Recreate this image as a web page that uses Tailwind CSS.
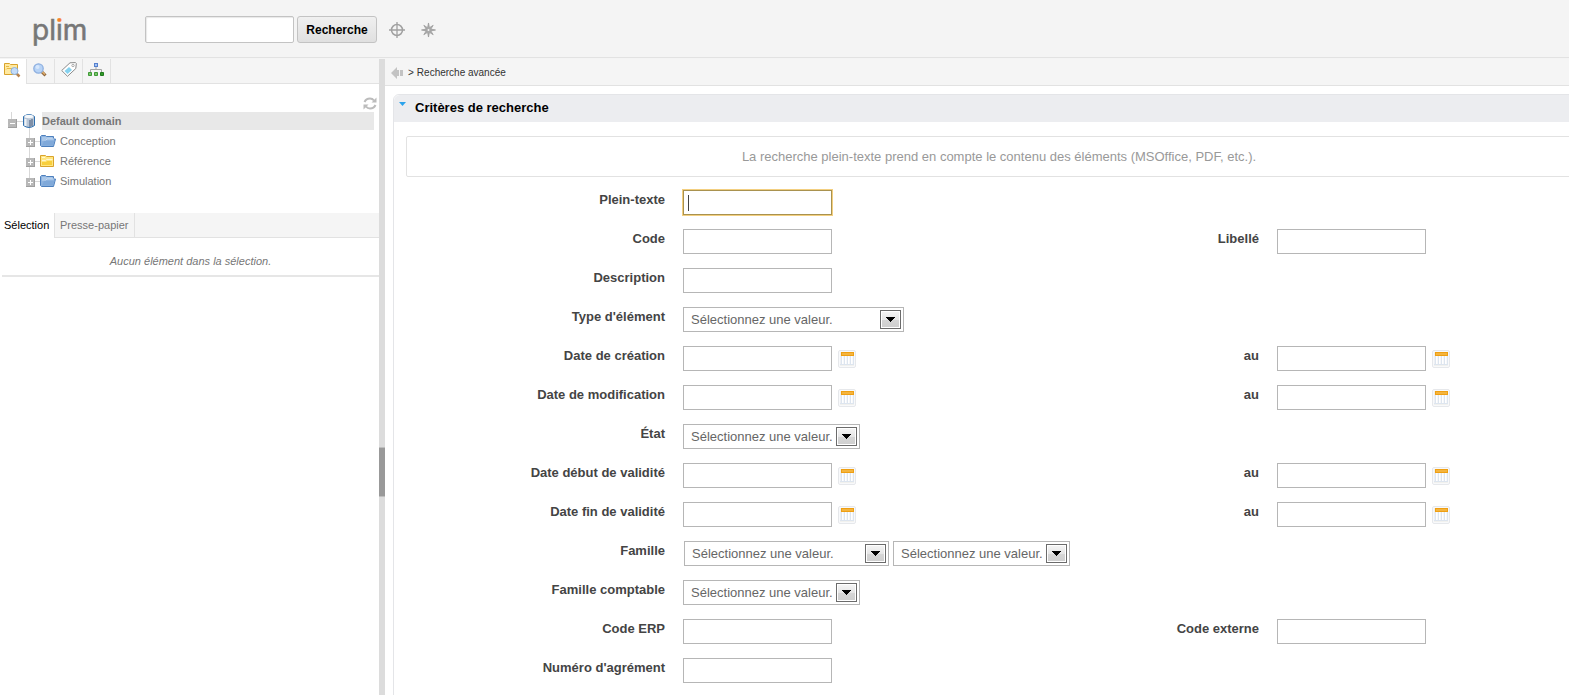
<!DOCTYPE html>
<html lang="fr">
<head>
<meta charset="utf-8">
<title>plim - Recherche avancée</title>
<script src="https://cdn.jsdelivr.net/npm/@tailwindcss/browser@4"></script>
</head>
<body class="flex h-screen flex-col overflow-hidden bg-white font-['Liberation_Sans',Arial,sans-serif] text-[11px] text-[#777]">

<svg class="absolute size-0" aria-hidden="true">
  <defs>
    <linearGradient id="ag" x2="0" y2="1"><stop offset="0" stop-color="#f4f4f4"/><stop offset=".5" stop-color="#e6e6e6"/><stop offset=".52" stop-color="#d6d6d6"/><stop offset="1" stop-color="#cfcfcf"/></linearGradient>
    <linearGradient id="dot" gradientUnits="userSpaceOnUse" x1="0" y1="0" x2="0" y2="40"><stop offset=".32" stop-color="#f5822a"/><stop offset=".32" stop-color="#777"/></linearGradient>
  </defs>
  <symbol id="calendar" viewBox="0 0 18 18">
    <rect x=".5" y=".5" width="17" height="17" rx="1.5" fill="#f8f9fb" stroke="#e6e8eb"/>
    <rect x="2" y="2" width="14" height="14" fill="#f1f1ee"/>
    <path d="M2 6H16V15H2Z" fill="#eef0f4"/>
    <path d="M4.5 6V14M7.500 6V14M10.500 6V14M13.500 6V14" stroke="#fff" stroke-width="2"/>
    <path d="M3.500 6V14M6.500 6V14M9.500 6V14M12.500 6V14M2 14.500H16M15.500 6V14" stroke="#dde5ef"/>
    <rect x="3" y="2" width="13" height="4" fill="#ef9f12"/>
    <path d="M4 4H15" stroke="#f8c96c"/>
  </symbol>
  <symbol id="arrow" viewBox="0 0 21 19">
    <rect x=".5" y=".5" width="20" height="18" fill="#fff" stroke="#6b6b6b"/>
    <rect x="2" y="2" width="17" height="15" fill="url(#ag)"/>
    <path d="M6 7H15V8H14V9H13V10H12V11H11V12H10V11H9V10H8V9H7V8H6Z" fill="#000"/>
  </symbol>
  <symbol id="folder-blue" viewBox="0 0 16 12">
    <path d="M.5 10.500V1.500L1.500.5H5.500L6.500 1.500H13.500V4H15.500L13.500 11.500H1.500Z" fill="#8db3df" stroke="#4c7fbd"/>
    <path d="M2 3H12.500M2 5H6L7 4H14" stroke="#c5daf1" fill="none"/>
    <path d="M2 10.500L4 6H14.500L13 10.500Z" fill="#80a9d9"/>
  </symbol>
  <symbol id="folder-yellow" viewBox="0 0 14 12">
    <path d="M.5 11.500V.5H5.500L6.500 1.500H13.500V11.500Z" fill="#ffe681" stroke="#d9a32c"/>
    <path d="M2 2.500H5M2 5.500H5.500L6.500 4.500H12.500" stroke="#fff7cf" fill="none"/>
    <path d="M2 7H6L7 6H12V10H2Z" fill="#f8cf3d"/>
  </symbol>
  <symbol id="plus" viewBox="0 0 9 9">
    <rect width="9" height="9" fill="#a0a0a0"/><path d="M0 0H8V8H0Z" fill="#b8b8b8"/>
    <path d="M2 4.500H7M4.500 2V7" stroke="#fff"/>
  </symbol>
  <symbol id="lens" viewBox="0 0 14 14">
    <path d="M8.500 8.500L12.500 12.500" stroke="#8d653d" stroke-width="3"/><path d="M8.500 8L12 11.500" stroke="#e2b06c" stroke-width="1.500"/>
    <circle cx="5.500" cy="5.500" r="4.700" fill="#b7d3f6" stroke="#8fb0e0" stroke-width="1.300"/>
    <circle cx="4.500" cy="4" r="2" fill="#d6e7fc"/>
  </symbol>
</svg>

<header class="h-[59px] shrink-0 bg-[#f4f4f4]">
  <div class="flex h-[58px] w-full items-center border-b border-[#e2e2e2] pt-[2px]">
    <a href="#" aria-label="plim" class="ml-8 w-[113px] shrink-0">
      <svg width="64" height="40" viewBox="0 0 64 40">
        <text x="0" y="30" font-family="Inter, sans-serif" font-size="28" fill="#777" stroke="#777" stroke-width=".6">pl<tspan fill="url(#dot)" stroke="url(#dot)">i</tspan>m</text>
      </svg>
    </a>
    <form class="flex items-center gap-[3px]">
      <input aria-label="Recherche" class="h-[27px] w-[149px] rounded-xs border border-[#c3c3c3] bg-white px-1 text-[13px] shadow-[inset_1px_1px_1px_#e8e8e8]">
      <button type="button" class="h-[27px] w-20 rounded-[3px] border border-[#c3c3c3] bg-linear-to-b from-[#f0f0f0] to-[#e0e0e0] text-center text-[12px] font-bold text-black">Recherche</button>
    </form>
    <button type="button" aria-label="Cibler" class="ml-3">
      <svg width="16" height="16" viewBox="0 0 16 16" fill="none" stroke="#a0a0a0"><circle cx="8" cy="8" r="5.500" stroke-width="1.500"/><path d="M8 0V16M0 8H16" stroke-width="1.300"/></svg>
    </button>
    <button type="button" aria-label="Raccourcis" class="ml-4">
      <svg width="15" height="16" viewBox="0 0 16 16"><path d="M8 .5L9 5.500L13 3L10.500 7L15.500 8L10.500 9L13 13L9 10.500L8 15.500L7 10.500L3 13L5.500 9L.5 8L5.500 7L3 3L7 5.500Z" fill="#aaa" stroke="#999" stroke-width=".8"/><circle cx="8" cy="8" r="1" fill="#f4f4f4"/></svg>
    </button>
  </div>
</header>

<div class="flex min-h-0 flex-1">
  <aside class="w-[379px] shrink-0">
    <nav class="flex h-[25px] border-b border-[#e2e2e2] bg-[#f5f5f5]" aria-label="Navigation">
      <button type="button" aria-label="Explorer" class="flex h-[25px] w-[27px] items-start border-r border-[#e2e2e2] bg-white pt-1 pl-1">
        <svg width="17" height="15" viewBox="0 0 17 15"><path d="M.5 11.500V.5H5.500L6.500 1.500H13.500V11.500Z" fill="#ffe9a0" stroke="#d9a32c"/><path d="M2 3.500H5M2 6.500L3 5.500H9" stroke="#e8b944" fill="none"/><path d="M12.500 10.500L15.500 13.500" stroke="#b98450" stroke-width="2.500"/><circle cx="10.500" cy="8" r="3.500" fill="#c3dcfa" stroke="#8fb2de"/></svg>
      </button>
      <button type="button" aria-label="Rechercher" class="flex w-7 items-start border-r border-[#e2e2e2] pt-1 pl-[6px]"><svg width="14" height="14"><use href="#lens"/></svg></button>
      <button type="button" aria-label="Étiquettes" class="flex w-7 items-start border-r border-[#e2e2e2] pt-[3px] pl-[6px]">
        <svg width="16" height="15" viewBox="0 0 16 15"><path d="M.7 8.500L9 .8L14.500.6L15.300 1.500L14.800 6.500L6.500 14.300Z" fill="#fff" stroke="#8a8a8a"/><path d="M3.500 9L8 5L11 8L6.500 12Z" fill="#86d2ef"/><circle cx="12" cy="3.500" r="1.200" fill="#fff" stroke="#999" stroke-width=".8"/></svg>
      </button>
      <button type="button" aria-label="Arborescence" class="flex w-7 items-start border-r border-[#e2e2e2] pt-1 pl-[5px]">
        <svg width="16" height="13" viewBox="0 0 16 13"><path d="M8 4V7M2.500 9V6.500H13.500V9" fill="none" stroke="#a5a5a5"/><rect x="6.500" y=".5" width="3" height="3" fill="#a3c4f7" stroke="#5680cc"/><path d="M.5 9.500H3.500V12.500H.5ZM6.500 9.500H9.500V12.500H6.500Z" fill="#79c46b" stroke="#3f9a37"/><path d="M12.500 9.500H15.500V12.500H12.500Z" fill="#319a29" stroke="#207a1d"/></svg>
      </button>
    </nav>

    <div class="flex h-7 items-end justify-end pr-[2px] pb-[2px]">
      <button type="button" aria-label="Actualiser"><svg width="14" height="13" viewBox="0 0 14 13" fill="none" stroke="#bcbcbc" stroke-width="2"><path d="M1.500 5Q3 1.500 7 1.500Q9.500 1.500 11 3.500M12.500 8Q11 11.500 7 11.500Q4.500 11.500 3 9.500"/><path d="M13.500.5V5.500H8.500ZM.5 12.500V7.500H5.500Z" fill="#bcbcbc" stroke="none"/></svg></button>
    </div>

    <ul class="h-[101px]">
      <li>
        <div class="flex h-[19px] items-start pr-[5px]">
          <svg class="shrink-0" width="42" height="19" viewBox="0 0 42 19">
            <path d="M11.500-1V8M17 9.500H23M29.500 15V19" stroke="#d8d8d8"/>
            <rect x="8" y="7" width="9" height="9" fill="#a0a0a0"/><path d="M8 7H16V15H8Z" fill="#b8b8b8"/><path d="M10 11.500H15" stroke="#fff"/>
            <path d="M23.500 4.500Q29 .5 34.500 4.500V13.500Q29 17.500 23.500 13.500Z" fill="#b9c6d6" stroke="#2e6fae"/><ellipse cx="29" cy="4.500" rx="4.500" ry="1.700" fill="#f5f8fb"/><path d="M25.500 7V14" stroke="#eef3f7" stroke-width="2"/><path d="M30 8V15M32 7V14" stroke="#7f90a8" stroke-width="2"/>
          </svg>
          <a href="#" class="h-[18px] flex-1 bg-[#e8e8e8] leading-[18px] font-bold">Default domain</a>
        </div>
        <ul>
          <li class="flex h-5 items-center"><svg class="shrink-0" width="40" height="20"><path d="M29.500 0V20M34 10.500H40" stroke="#d8d8d8"/><use href="#plus" x="26" y="7" width="9" height="9"/></svg><svg width="16" height="12"><use href="#folder-blue"/></svg><a href="#" class="ml-1">Conception</a></li>
          <li class="flex h-5 items-center"><svg class="shrink-0" width="40" height="20"><path d="M29.500 0V20M34 10.500H40" stroke="#d8d8d8"/><use href="#plus" x="26" y="7" width="9" height="9"/></svg><svg width="14" height="12"><use href="#folder-yellow"/></svg><a href="#" class="ml-[6px]">Référence</a></li>
          <li class="flex h-5 items-center"><svg class="shrink-0" width="40" height="20"><path d="M29.500 0V10M34 10.500H40" stroke="#d8d8d8"/><use href="#plus" x="26" y="7" width="9" height="9"/></svg><svg width="16" height="12"><use href="#folder-blue"/></svg><a href="#" class="ml-1">Simulation</a></li>
        </ul>
      </li>
    </ul>

    <div class="flex h-[25px] border-b border-[#e2e2e2] bg-[#f5f5f5]">
      <button type="button" class="h-[25px] w-[55px] border-r border-[#e2e2e2] bg-white pl-1 text-left text-black">Sélection</button>
      <button type="button" class="w-20 border-r border-[#e2e2e2] pl-[5px] text-left">Presse-papier</button>
    </div>
    <p class="ml-[2px] h-[39px] border-b-2 border-[#e6e6e6] pt-[15px] text-center italic">Aucun élément dans la sélection.</p>
  </aside>

  <div class="flex w-[6px] shrink-0 items-center bg-[#dcdcdc] pt-[189px] pb-0" role="separator" aria-orientation="vertical">
    <div class="h-[50px] w-full border-y border-[#bdbdbd] bg-[#999]"></div>
  </div>

  <main class="min-w-0 flex-1 overflow-hidden">
    <nav class="flex h-[27px] items-center border-b border-[#e2e2e2] bg-[#f5f5f5] pt-px pl-[6px] text-[10px] text-[#333]" aria-label="Fil d'Ariane">
      <svg width="12" height="12" viewBox="0 0 12 12" fill="#c3c3c3"><path d="M0 6L6 0V3H8V9H6V12ZM9 3H12V9H9Z"/></svg>
      <span class="ml-[5px]">&gt;</span><a href="#" class="ml-[3px]">Recherche avancée</a>
    </nav>
    <section class="mt-2 -mr-9 ml-2 h-full rounded-t-md border border-[#e4e5e8]">
      <h2 class="flex h-[27px] rounded-t-md bg-[#ecedf0] pl-[5px] text-[13px] leading-[26px] font-bold text-black">
        <svg class="mt-[7px]" width="8" height="4"><path d="M0 0H7L3.500 4Z" fill="#2ba3ec"/></svg><span class="ml-2">Critères de recherche</span>
      </h2>
      <form class="px-3 pt-[14px] text-[13px]">
        <p class="h-[41px] rounded-xs border border-[#e2e2e2] text-center leading-[39px] text-[#999]">La recherche plein-texte prend en compte le contenu des éléments (MSOffice, PDF, etc.).</p>
        <div class="mt-[13px] mr-4 grid auto-rows-[25px] grid-cols-[259px_1fr_259px_1fr] gap-x-[18px] gap-y-[14px] text-[#666] [&>label]:text-right [&>label]:leading-5 [&>label]:font-bold [&>label]:text-[#444]">

          <label for="f1">Plein-texte</label>
          <div class="relative col-span-3"><input id="f1" autofocus class="h-[25px] w-[149px] border border-[#a9924f] bg-white px-1 caret-transparent outline-1 outline-[#f3cf80]"><span class="pointer-events-none absolute top-[5px] left-[5px] h-4 w-px bg-[#444]"></span></div>

          <label for="f2">Code</label>
          <div><input id="f2" class="h-[25px] w-[149px] border border-[#b6b6b6] bg-white px-1"></div>
          <label for="f3">Libellé</label>
          <div><input id="f3" class="h-[25px] w-[149px] border border-[#b6b6b6] bg-white px-1"></div>

          <label for="f4">Description</label>
          <div class="col-span-3"><input id="f4" class="h-[25px] w-[149px] border border-[#b6b6b6] bg-white px-1"></div>

          <label for="f5">Type d'élément</label>
          <div class="col-span-3 flex"><div class="relative"><select id="f5" class="h-[25px] w-[221px] appearance-none border border-[#b6b6b6] bg-white pl-[7px]"><option>Sélectionnez une valeur.</option></select><svg class="pointer-events-none absolute top-[3px] right-[3px]" width="21" height="19"><use href="#arrow"/></svg></div></div>

          <label for="f6">Date de création</label>
          <div class="flex items-start gap-[6px]"><input id="f6" class="h-[25px] w-[149px] border border-[#b6b6b6] bg-white px-1"><button type="button" aria-label="Calendrier" class="mt-1"><svg width="18" height="18"><use href="#calendar"/></svg></button></div>
          <label for="f7">au</label>
          <div class="flex items-start gap-[6px]"><input id="f7" class="h-[25px] w-[149px] border border-[#b6b6b6] bg-white px-1"><button type="button" aria-label="Calendrier" class="mt-1"><svg width="18" height="18"><use href="#calendar"/></svg></button></div>

          <label for="f8">Date de modification</label>
          <div class="flex items-start gap-[6px]"><input id="f8" class="h-[25px] w-[149px] border border-[#b6b6b6] bg-white px-1"><button type="button" aria-label="Calendrier" class="mt-1"><svg width="18" height="18"><use href="#calendar"/></svg></button></div>
          <label for="f9">au</label>
          <div class="flex items-start gap-[6px]"><input id="f9" class="h-[25px] w-[149px] border border-[#b6b6b6] bg-white px-1"><button type="button" aria-label="Calendrier" class="mt-1"><svg width="18" height="18"><use href="#calendar"/></svg></button></div>

          <label for="f10">État</label>
          <div class="col-span-3 flex"><div class="relative"><select id="f10" class="h-[25px] w-[177px] appearance-none border border-[#b6b6b6] bg-white pl-[7px]"><option>Sélectionnez une valeur.</option></select><svg class="pointer-events-none absolute top-[3px] right-[3px]" width="21" height="19"><use href="#arrow"/></svg></div></div>

          <label for="f11">Date début de validité</label>
          <div class="flex items-start gap-[6px]"><input id="f11" class="h-[25px] w-[149px] border border-[#b6b6b6] bg-white px-1"><button type="button" aria-label="Calendrier" class="mt-1"><svg width="18" height="18"><use href="#calendar"/></svg></button></div>
          <label for="f12">au</label>
          <div class="flex items-start gap-[6px]"><input id="f12" class="h-[25px] w-[149px] border border-[#b6b6b6] bg-white px-1"><button type="button" aria-label="Calendrier" class="mt-1"><svg width="18" height="18"><use href="#calendar"/></svg></button></div>

          <label for="f13">Date fin de validité</label>
          <div class="flex items-start gap-[6px]"><input id="f13" class="h-[25px] w-[149px] border border-[#b6b6b6] bg-white px-1"><button type="button" aria-label="Calendrier" class="mt-1"><svg width="18" height="18"><use href="#calendar"/></svg></button></div>
          <label for="f14">au</label>
          <div class="flex items-start gap-[6px]"><input id="f14" class="h-[25px] w-[149px] border border-[#b6b6b6] bg-white px-1"><button type="button" aria-label="Calendrier" class="mt-1"><svg width="18" height="18"><use href="#calendar"/></svg></button></div>

          <label for="f15">Famille</label>
          <div class="col-span-3 flex gap-1 pl-px">
            <div class="relative"><select id="f15" class="h-[25px] w-[205px] appearance-none border border-[#b6b6b6] bg-white pl-[7px]"><option>Sélectionnez une valeur.</option></select><svg class="pointer-events-none absolute top-[3px] right-[3px]" width="21" height="19"><use href="#arrow"/></svg></div>
            <div class="relative"><select aria-label="Sous-famille" class="h-[25px] w-[177px] appearance-none border border-[#b6b6b6] bg-white pl-[7px]"><option>Sélectionnez une valeur.</option></select><svg class="pointer-events-none absolute top-[3px] right-[3px]" width="21" height="19"><use href="#arrow"/></svg></div>
          </div>

          <label for="f16">Famille comptable</label>
          <div class="col-span-3 flex"><div class="relative"><select id="f16" class="h-[25px] w-[177px] appearance-none border border-[#b6b6b6] bg-white pl-[7px]"><option>Sélectionnez une valeur.</option></select><svg class="pointer-events-none absolute top-[3px] right-[3px]" width="21" height="19"><use href="#arrow"/></svg></div></div>

          <label for="f17">Code ERP</label>
          <div><input id="f17" class="h-[25px] w-[149px] border border-[#b6b6b6] bg-white px-1"></div>
          <label for="f18">Code externe</label>
          <div><input id="f18" class="h-[25px] w-[149px] border border-[#b6b6b6] bg-white px-1"></div>

          <label for="f19">Numéro d'agrément</label>
          <div class="col-span-3"><input id="f19" class="h-[25px] w-[149px] border border-[#b6b6b6] bg-white px-1"></div>
        </div>
      </form>
    </section>
  </main>
</div>
</body>
</html>
